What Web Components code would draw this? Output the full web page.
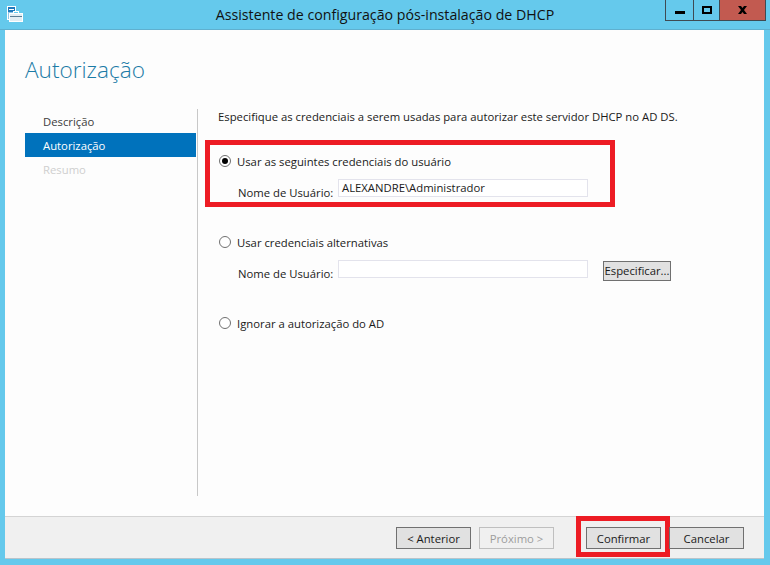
<!DOCTYPE html>
<html lang="pt">
<head>
<meta charset="utf-8">
<title>Assistente de configuração pós-instalação de DHCP</title>
<style>
	html, body { margin: 0; padding: 0; background: #65c9ec; }
	body { font-family: "Open Sans", "Noto Sans", sans-serif; font-size: 11.3px; color: #1a1a1a; }
</style>
</head>
<body>
<wiz-window heading="Assistente de configuração pós-instalação de DHCP">
	<wiz-nav slot="nav">
		<wiz-nav-item>Descrição</wiz-nav-item>
		<wiz-nav-item active>Autorização</wiz-nav-item>
		<wiz-nav-item disabled>Resumo</wiz-nav-item>
	</wiz-nav>
	<wiz-page slot="page" heading="Especifique as credenciais a serem usadas para autorizar este servidor DHCP no AD DS.">
		<wiz-option checked highlight label="Usar as seguintes credenciais do usuário" value="ALEXANDRE\Administrador"></wiz-option>
		<wiz-option label="Usar credenciais alternativas" value="" action="Especificar..."></wiz-option>
		<wiz-option label="Ignorar a autorização do AD" plain></wiz-option>
	</wiz-page>
	<wiz-button slot="footer">&lt; Anterior</wiz-button>
	<wiz-button slot="footer" disabled>Próximo &gt;</wiz-button>
	<wiz-button slot="footer" highlight gap>Confirmar</wiz-button>
	<wiz-button slot="footer">Cancelar</wiz-button>
</wiz-window>
<script>
class WizWindow extends HTMLElement {
	constructor() {
		super();
		this.attachShadow({ mode: 'open' });
		this.shadowRoot.innerHTML = `
			<style>
				:host { display: flex; flex-direction: column; box-sizing: border-box; width: 770px; height: 565px; padding: 0 6px 6px 5px; background: #65c9ec; }
				.bar { position: relative; display: flex; align-items: flex-start; justify-content: center; height: 30px; flex: none; box-sizing: border-box; border-bottom: 1px solid #5fb0cf; margin: 0 -6px 0 -5px; }
				.bar svg.app { position: absolute; left: 7px; top: 6px; }
				.bar h2 { margin: 0; font-size: 14.2px; font-weight: 400; line-height: 30px; color: #111; }
				.controls { position: absolute; right: 4px; top: 0; display: flex; height: 21px; box-sizing: border-box; border: 1px solid #3f4a52; border-top: 0; }
				.controls span { display: flex; align-items: center; justify-content: center; box-sizing: border-box; }
				.min { width: 28px; border-right: 1px solid #3f4a52; }
				.max { width: 26px; border-right: 1px solid #3f4a52; }
				.close { width: 45px; background: #c25a50; }
				.main { flex: 1; min-height: 0; display: flex; flex-direction: column; background: #fdfdfd; padding: 0 0 0 20px; }
				h1 { margin: 0; padding-top: 23px; height: 56px; box-sizing: border-box; font-size: 22.6px; font-weight: 300; line-height: 34px; color: #1b7ba6; }
				.cols { display: flex; height: 387px; margin-top: 23px; }
				.nav { width: 171px; flex: none; margin-right: 1px; }
				.page { flex: 1; border-left: 1px solid #c8c8c8; padding-left: 20px; }
				.foot { flex: 1; display: flex; justify-content: flex-end; align-items: flex-start; gap: 8px; margin: 20px 0 0 -20px; padding: 10px 20px 0 0; background: #f0f0f0; border-top: 1px solid #d4d4d4; border-bottom: 1px solid #b9c4cb; }
			</style>
			<div class="bar">
				<svg class="app" width="17" height="16" viewBox="0 0 17 16">
					<rect x="0.500" y="0.500" width="8" height="13" fill="#8fc4e6" stroke="#fff"/>
					<rect x="1" y="1" width="7" height="5" fill="#1f79bd"/>
					<rect x="2" y="3" width="5" height="1" fill="#fff"/>
					<rect x="2.500" y="7.500" width="13" height="8" fill="#e3edf3" stroke="#fff"/>
					<rect x="6.500" y="5.500" width="5" height="2" fill="#65c9ec" stroke="#fff"/>
					<rect x="3" y="10" width="12" height="1" fill="#5b7f96"/>
				</svg>
				<h2></h2>
				<div class="controls">
					<span class="min"><svg width="10" height="8" viewBox="0 0 10 8"><rect y="5" width="10" height="3"/></svg></span>
					<span class="max"><svg width="10" height="8" viewBox="0 0 10 8"><path fill-rule="evenodd" d="M0 0h10v8H0zM2 2v4h6V2z"/></svg></span>
					<span class="close"><svg width="9" height="8" viewBox="0 0 9 8"><path d="M0 0h3l1.500 2L6 0h3L6 4l3 4H6L4.500 6 3 8H0l3-4z"/></svg></span>
				</div>
			</div>
			<div class="main">
				<h1>Autorização</h1>
				<div class="cols">
					<div class="nav"><slot name="nav"></slot></div>
					<div class="page"><slot name="page"></slot></div>
				</div>
				<div class="foot"><slot name="footer"></slot></div>
			</div>
		`;
		this.shadowRoot.querySelector('h2').textContent = this.getAttribute('heading');
	}
}

class WizNav extends HTMLElement {
	constructor() {
		super();
		this.attachShadow({ mode: 'open' });
		this.shadowRoot.innerHTML = `
			<style>
				:host { display: flex; flex-direction: column; }
			</style>
			<slot></slot>
		`;
	}
}

class WizNavItem extends HTMLElement {
	constructor() {
		super();
		this.attachShadow({ mode: 'open' });
		this.shadowRoot.innerHTML = `
			<style>
				:host { display: block; height: 24px; line-height: 26px; padding-left: 18px; color: #3c3c3c; }
				:host([active]) { background: #0072bc; color: #fff; }
				:host([disabled]) { color: #cfcfcf; }
			</style>
			<slot></slot>
		`;
	}
}

class WizPage extends HTMLElement {
	constructor() {
		super();
		this.attachShadow({ mode: 'open' });
		this.shadowRoot.innerHTML = `
			<style>
				:host { display: flex; flex-direction: column; }
				p { margin: 0; height: 44px; line-height: 15px; }
				.opts { display: flex; flex-direction: column; gap: 26px; }
			</style>
			<p></p>
			<div class="opts"><slot></slot></div>
		`;
		this.shadowRoot.querySelector('p').textContent = this.getAttribute('heading');
	}
}

class WizOption extends HTMLElement {
	constructor() {
		super();
		this.attachShadow({ mode: 'open' });
		const checked = this.hasAttribute('checked');
		const plain = this.hasAttribute('plain');
		const action = this.getAttribute('action');
		this.shadowRoot.innerHTML = `
			<style>
				:host { position: relative; display: flex; flex-direction: column; gap: 10px; height: 55px; }
				:host([plain]) { height: 16px; }
				.head { display: flex; align-items: center; gap: 6px; height: 16px; padding-left: 1px; }
				.head svg { flex: none; }
				.row { display: flex; align-items: flex-start; height: 20px; padding-left: 20px; }
				label { width: 100px; line-height: 22px; padding-top: 3px; flex: none; }
				.field { box-sizing: border-box; width: 250px; height: 18px; line-height: 15px; padding-left: 3px; background: #fff; border: 1px solid #e3e3ec; }
				button { font: inherit; color: inherit; box-sizing: border-box; width: 68px; height: 20px; margin: 1px 0 0 15px; padding: 0; background: #e1e1e1; border: 1px solid #707070; line-height: 16px; }
				.mark { position: absolute; left: -13px; top: -13px; width: 410px; height: 67px; box-sizing: border-box; border: 5px solid #ed1c24; pointer-events: none; }
			</style>
			<div class="head">
				<svg width="12" height="12" viewBox="0 0 12 12">
					<circle cx="6" cy="6" r="5.500" fill="#fff" stroke="#6f6f6f"/>
					${checked ? '<circle cx="6" cy="6" r="3" fill="#000"/>' : ''}
				</svg>
				<span></span>
			</div>
			${plain ? '' : `<div class="row"><label>Nome de Usuário:</label><div class="field"></div>${action ? `<button>${action}</button>` : ''}</div>`}
			${this.hasAttribute('highlight') ? '<div class="mark"></div>' : ''}
		`;
		this.shadowRoot.querySelector('.head span').textContent = this.getAttribute('label');
		const field = this.shadowRoot.querySelector('.field');
		if (field) field.textContent = this.getAttribute('value');
	}
}

class WizButton extends HTMLElement {
	constructor() {
		super();
		this.attachShadow({ mode: 'open' });
		this.shadowRoot.innerHTML = `
			<style>
				:host { position: relative; display: flex; align-items: center; justify-content: center; box-sizing: border-box; width: 75px; height: 22px; background: #e1e1e1; border: 1px solid #707070; }
				:host([disabled]) { background: #f0f0f0; border-color: #bfbfbf; color: #9d9d9d; }
				:host([gap]) { margin-left: 24px; }
				.mark { position: absolute; left: -11px; top: -12px; width: 94px; height: 41px; box-sizing: border-box; border: 5px solid #ed1c24; }
			</style>
			<slot></slot>
			${this.hasAttribute('highlight') ? '<div class="mark"></div>' : ''}
		`;
	}
}

customElements.define('wiz-window', WizWindow);
customElements.define('wiz-nav', WizNav);
customElements.define('wiz-nav-item', WizNavItem);
customElements.define('wiz-page', WizPage);
customElements.define('wiz-option', WizOption);
customElements.define('wiz-button', WizButton);
</script>
</body>
</html>
